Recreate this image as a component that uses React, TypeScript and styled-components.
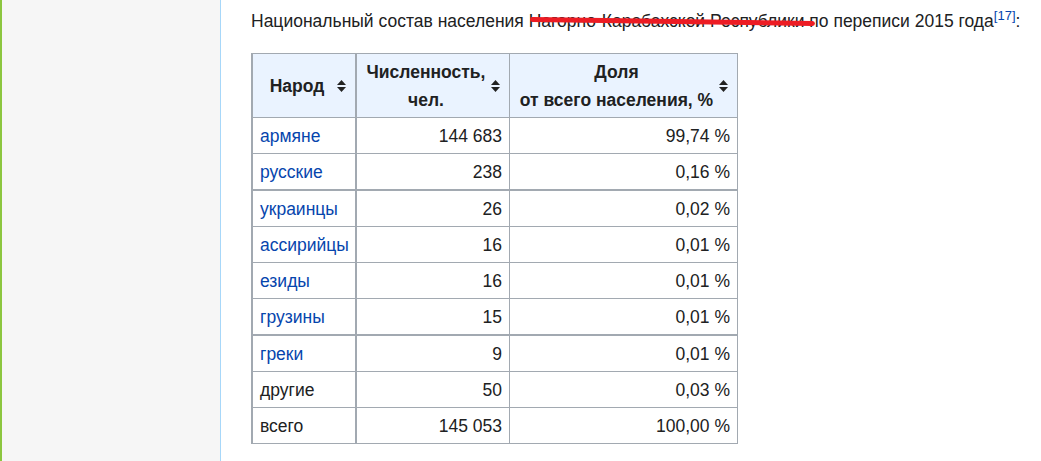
import React from "react";
import styled, { createGlobalStyle } from "styled-components";

const TEXT = "#202122";
const LINK = "#0645ad";
const GRID = "#a2a9b1";

const rows = [
  { name: "армяне", count: "144 683", share: "99,74 %", link: true },
  { name: "русские", count: "238", share: "0,16 %", link: true },
  { name: "украинцы", count: "26", share: "0,02 %", link: true, thick: true },
  { name: "ассирийцы", count: "16", share: "0,01 %", link: true },
  { name: "езиды", count: "16", share: "0,01 %", link: true },
  { name: "грузины", count: "15", share: "0,01 %", link: true },
  { name: "греки", count: "9", share: "0,01 %", link: true, thick: true },
  { name: "другие", count: "50", share: "0,03 %" },
  { name: "всего", count: "145 053", share: "100,00 %" },
];

const SortIcon = () => (
  <SortSvg viewBox="0 0 9 12" width={9} height={12}>
    <polygon points="4.5,0 9,5 0,5" fill="#222" />
    <polygon points="0,7 9,7 4.5,12" fill="#222" />
  </SortSvg>
);

const HeadCell = ({ w, children }: { w: number; children: React.ReactNode }) => (
  <Th w={w}>
    <HeadInner>
      <HeadText>{children}</HeadText>
      <SortIcon />
    </HeadInner>
  </Th>
);

const App = () => {
  return (
    <>
      <GlobalStyle />
      <Page>
        <Sidebar />
        <Content>
          <Caption>
            Национальный состав населения <Struck>Нагорно-Карабахской Республики</Struck> по переписи 2015
            года
            <Ref href="#">[17]</Ref>:
          </Caption>
          <Table>
            <thead>
              <tr>
                <HeadCell w={104}>Народ</HeadCell>
                <HeadCell w={153}>
                  Численность,
                  <br />
                  чел.
                </HeadCell>
                <HeadCell w={228}>
                  Доля
                  <br />
                  от всего населения, %
                </HeadCell>
              </tr>
            </thead>
            <tbody>
              {rows.map((r) => (
                <tr key={r.name}>
                  <Td thick={r.thick} first>
                    {r.link ? <Link href="#">{r.name}</Link> : r.name}
                  </Td>
                  <Td thick={r.thick} num>
                    {r.count}
                  </Td>
                  <Td thick={r.thick} num>
                    {r.share}
                  </Td>
                </tr>
              ))}
            </tbody>
          </Table>
        </Content>
      </Page>
    </>
  );
};

const GlobalStyle = createGlobalStyle`
  html, body {
    margin: 0;
    padding: 0;
    background: #fff;
  }
  body {
    font-family: "Liberation Sans", Arial, sans-serif;
    color: ${TEXT};
  }
`;

const Page = styled.div`
  display: flex;
  min-height: 100vh;
`;

const Sidebar = styled.div`
  flex: 0 0 auto;
  width: 218px;
  background: #f6f6f6;
  border-left: 2px solid #8cc63f;
  border-right: 1px solid #a7d7f9;
`;

const Content = styled.div`
  flex: 1;
  padding: 7px 0 0 30px;
  font-size: 17.5px;
  line-height: 28px;
`;

const Caption = styled.p`
  margin: 0;
`;

const Struck = styled.span`
  position: relative;

  &::after {
    content: "";
    position: absolute;
    left: 1px;
    top: 6px;
    width: 285px;
    height: 5px;
    border-radius: 3px;
    background: #ed1c24;
    transform: rotate(0.8deg);
    transform-origin: left center;
  }
`;

const Ref = styled.a`
  color: ${LINK};
  text-decoration: none;
  font-size: 13px;
  line-height: 0;
  vertical-align: super;
`;

const Link = styled.a`
  color: ${LINK};
  text-decoration: none;
`;

const Table = styled.table`
  margin-top: 18px;
  width: 487px;
  box-sizing: border-box;
  table-layout: fixed;
  border-collapse: separate;
  border-spacing: 0;
  border-top: 1px solid ${GRID};
  border-left: 2px solid ${GRID};
  color: ${TEXT};
`;

const Th = styled.th<{ w: number }>`
  width: ${(p) => p.w}px;
  box-sizing: border-box;
  padding: 3.5px 9.5px 3.5px 7px;
  background: #eaf3ff;
  border-right: 1px solid ${GRID};
  border-bottom: 1px solid ${GRID};
  font-weight: bold;
  line-height: 28px;

  &:first-child {
    border-right-width: 2px;
  }
`;

const HeadInner = styled.div`
  display: flex;
  align-items: center;
  gap: 2.5px;
`;

const HeadText = styled.span`
  flex: 1;
  text-align: center;
`;

const SortSvg = styled.svg`
  flex: 0 0 auto;
  display: block;
`;

const Td = styled.td<{ thick?: boolean; num?: boolean; first?: boolean }>`
  padding: 3.5px 7px;
  line-height: 28px;
  text-align: ${(p) => (p.num ? "right" : "left")};
  border-right: ${(p) => (p.first ? 2 : 1)}px solid ${GRID};
  border-bottom: 1px solid ${GRID};
  border-top: ${(p) => (p.thick ? `1px solid ${GRID}` : "none")};
  white-space: nowrap;
`;

export default App;
